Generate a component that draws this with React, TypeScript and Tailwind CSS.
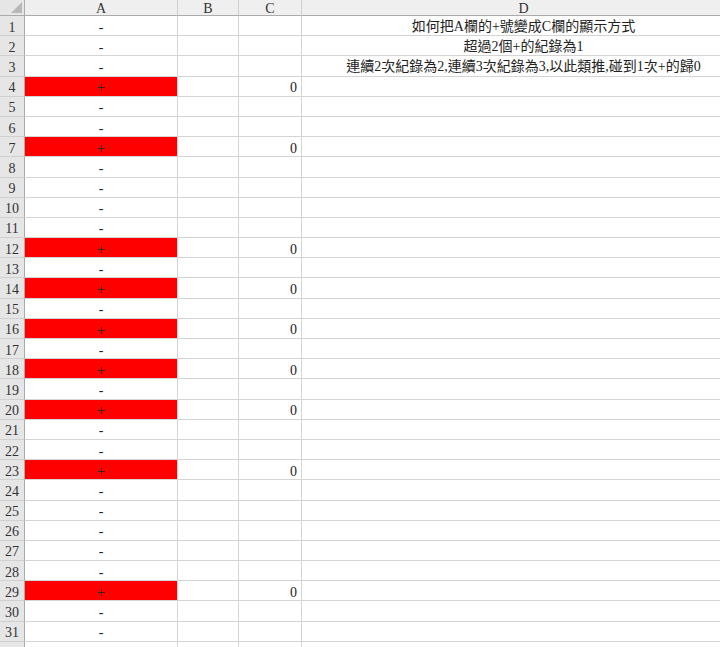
import React from 'react';

const plusRows = [4, 7, 12, 14, 16, 18, 20, 23, 29];

const notes: Record<number, string> = {
  1: '如何把A欄的+號變成C欄的顯示方式',
  2: '超過2個+的紀錄為1',
  3: '連續2次紀錄為2,連續3次紀錄為3,以此類推,碰到1次+的歸0',
};

const font = { fontFamily: '"Liberation Serif", "Noto Sans CJK TC", serif' };

export default function App() {
  const rows = Array.from({ length: 32 }, (_, i) => i + 1);

  return (
    <div className="w-[720px] h-[647px] overflow-hidden bg-white text-[14px] text-[#222]" style={font}>
      <div className="grid grid-cols-[25px_153px_61px_63px_444px] w-[746px]">
        {/* header */}
        <div className="h-[16px] bg-[#e6e6e6] border-r border-b border-[#ababab] relative">
          <div className="absolute right-[2px] bottom-[2px] w-0 h-0 border-l-[11px] border-l-transparent border-b-[11px] border-b-[#b8b8b8]" />
        </div>
        {['A', 'B', 'C', 'D'].map((c) => (
          <div
            key={c}
            className="h-[16px] bg-[#efefef] border-r border-b border-r-[#d0d0d0] border-b-[#ababab] flex items-center justify-center pt-[2px] leading-none text-[#333]"
          >
            {c}
          </div>
        ))}

        {rows.map((r) => {
          const plus = plusRows.includes(r);
          return (
            <React.Fragment key={r}>
              <div className="h-[20.2px] bg-[#e6e6e6] border-r border-b border-r-[#ababab] border-b-[#d0d0d0] flex items-center justify-center pt-[3px] text-[#333]">
                {r < 32 ? r : ''}
              </div>
              <div
                className={
                  'h-[20.2px] border-r border-b border-[#d4d4d4] flex items-center justify-center pt-[3px] ' +
                  (plus ? 'bg-[#ff0000] text-[15px]' : '')
                }
              >
                {r < 32 ? (plus ? '+' : '-') : ''}
              </div>
              <div className="h-[20.2px] border-r border-b border-[#d4d4d4]" />
              <div className="h-[20.2px] border-r border-b border-[#d4d4d4] flex items-center justify-end pr-[4px] pt-[3px]">
                {plus ? '0' : ''}
              </div>
              <div className="h-[20.2px] border-r border-b border-[#d4d4d4] flex items-center justify-center pt-[2px] whitespace-nowrap">
                {notes[r] ?? ''}
              </div>
            </React.Fragment>
          );
        })}
      </div>
    </div>
  );
}
